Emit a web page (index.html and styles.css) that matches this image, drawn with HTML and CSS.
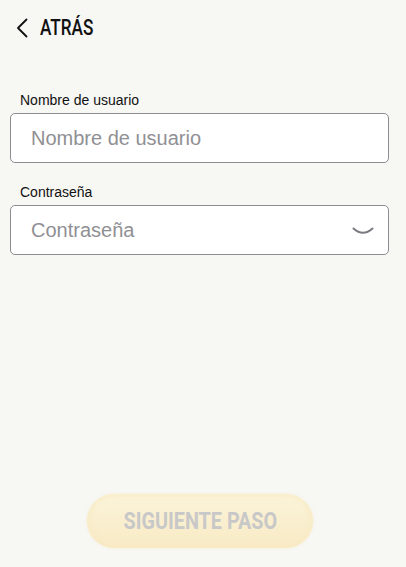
FILE: index.html
```html
<!DOCTYPE html>
<html lang="es">
<head>
<meta charset="utf-8">
<title>Login</title>
<link rel="stylesheet" href="styles.css">
</head>
<body>
<div class="page">
  <header class="header">
    <svg class="back-icon" width="12" height="20" viewBox="0 0 12 20"><path d="M10.5 1.5 L2 10 L10.5 18.5" fill="none" stroke="#111" stroke-width="1.8" stroke-linecap="round" stroke-linejoin="round"/></svg>
    <span class="title"><span class="cond">ATRÁS</span></span>
  </header>
  <form class="form">
    <div class="field">
      <label class="label" for="user">Nombre de usuario</label>
      <div class="input-box">
        <input id="user" class="input" type="text" placeholder="Nombre de usuario">
      </div>
    </div>
    <div class="field">
      <label class="label" for="pass">Contraseña</label>
      <div class="input-box">
        <input id="pass" class="input" type="password" placeholder="Contraseña">
        <svg class="eye" width="22" height="10" viewBox="0 0 22 10"><path d="M1.5 2.5 Q11 11 20.5 2.5" fill="none" stroke="#7a7a80" stroke-width="2" stroke-linecap="round"/></svg>
      </div>
    </div>
  </form>
  <div class="spacer"></div>
  <div class="footer">
    <button class="next" type="button"><span class="cond">SIGUIENTE PASO</span></button>
  </div>
</div>
</body>
</html>
```
FILE: styles.css
```css
html, body {
  margin: 0;
  padding: 0;
  background: #f7f7f4;
}
.page {
  width: 406px;
  height: 567px;
  display: flex;
  flex-direction: column;
  font-family: "Liberation Sans", Arial, sans-serif;
}
.header {
  display: flex;
  align-items: center;
  height: 56px;
  padding-left: 16px;
  box-sizing: border-box;
}
.back-icon {
  display: block;
}
.title {
  margin-left: 12px;
  font-family: Roboto, "DejaVu Sans", sans-serif;
  font-weight: 500;
  font-size: 22px;
  color: #111;
  line-height: 1;
}
.cond {
  display: inline-block;
  transform: scaleX(0.78);
  transform-origin: left center;
}
.form {
  display: flex;
  flex-direction: column;
  gap: 21px;
  padding: 36px 17px 0 10px;
}
.field {
  display: flex;
  flex-direction: column;
}
.label {
  font-size: 14px;
  color: #111;
  margin: 0 0 5px 10px;
  line-height: 16px;
}
.input-box {
  display: flex;
  align-items: center;
  height: 50px;
  box-sizing: border-box;
  border: 1px solid #8c8c91;
  border-radius: 5px;
  background: #fff;
  padding: 0 14px 0 20px;
}
.input {
  flex: 1;
  border: none;
  outline: none;
  background: transparent;
  font-family: "Liberation Sans", Arial, sans-serif;
  font-size: 20px;
  color: #111;
  padding: 0;
}
.input::placeholder {
  color: #909094;
}
.eye {
  display: block;
  margin-top: 2px;
}
.spacer {
  flex: 1;
}
.footer {
  display: flex;
  justify-content: center;
  padding: 0 6px 19px 0;
}
.next {
  width: 226px;
  height: 54px;
  border: none;
  border-radius: 27px;
  background: linear-gradient(#fbf4da, #f8eac4);
  box-shadow: 0 0 5px 2px rgba(248, 234, 196, 0.9) inset, 0 0 3px rgba(248, 234, 196, 0.7);
  font-family: Roboto, "DejaVu Sans", sans-serif;
  font-weight: 700;
  font-size: 23px;
  color: #c8c8c8;
  padding: 0;
  cursor: default;
}
.next .cond {
  transform: scaleX(0.86);
  transform-origin: center center;
}
```
